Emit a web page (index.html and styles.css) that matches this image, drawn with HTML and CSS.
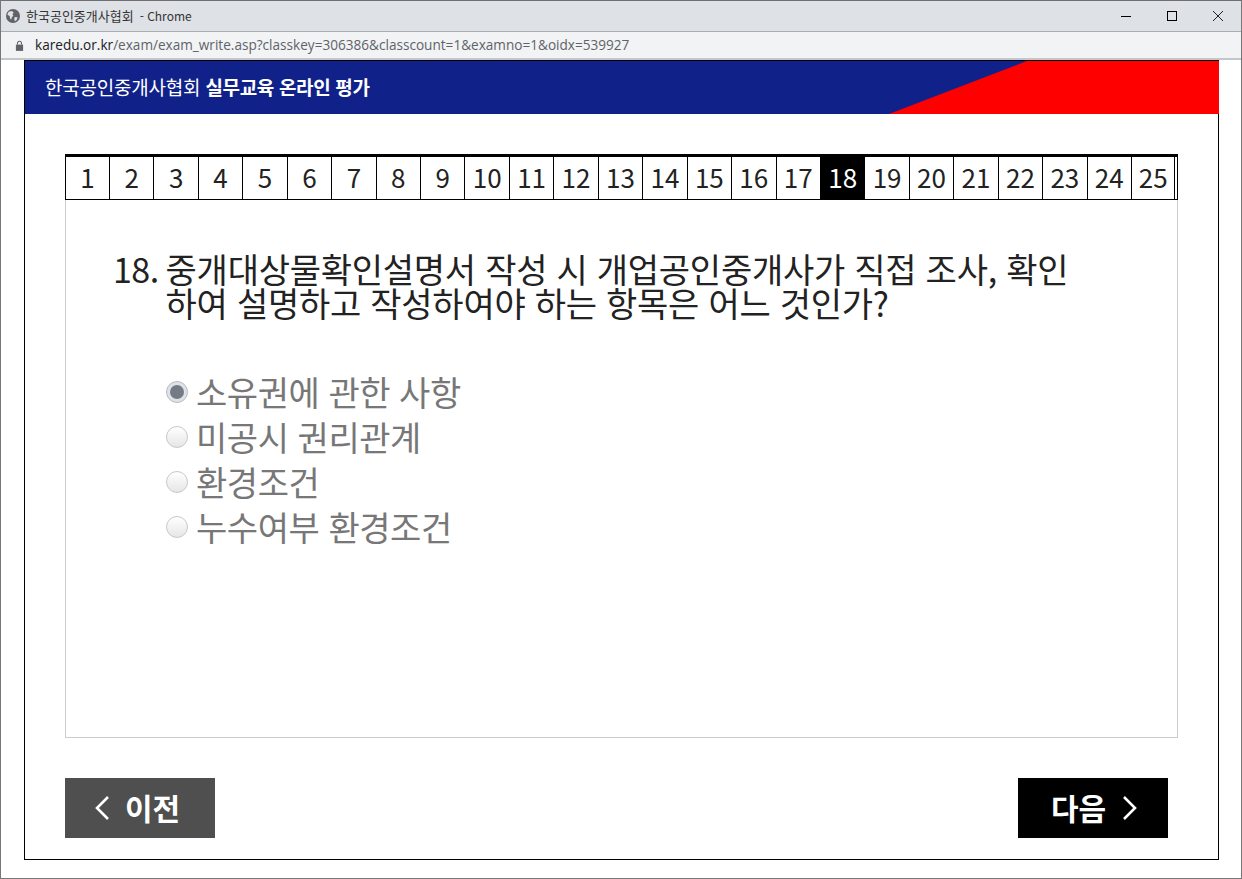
FILE: index.html
```html
<!DOCTYPE html>
<html lang="ko">
<head>
<meta charset="utf-8">
<title>한국공인중개사협회 - Chrome</title>
<link rel="stylesheet" href="styles.css">
</head>
<body>
<div class="window">
  <div class="titlebar">
    <svg class="favicon" viewBox="0 0 16 16" width="14" height="14"><circle cx="8" cy="8" r="8" fill="#5f6368"/><path d="M3 3.2 6.6 2.4 8.8 4 7.4 6 8.4 7.4 6.6 9.6 5.8 12.4 4.6 10.6 4.2 8 1.6 6.6Z M10 9 13.2 9.4 12.2 12.6 10 14 9.4 11.4Z" fill="#dee1e6"/></svg>
    <span class="title">한국공인중개사협회</span>
    <span class="title-app">- Chrome</span>
    <div class="controls">
      <svg width="12" height="12" viewBox="0 0 12 12"><path d="M1 6.5H11" stroke="#000" stroke-width="1"/></svg>
      <svg width="12" height="12" viewBox="0 0 12 12"><rect x="1.5" y="1.5" width="9" height="9" fill="none" stroke="#000" stroke-width="1"/></svg>
      <svg width="12" height="12" viewBox="0 0 12 12"><path d="M1 1 11 11M11 1 1 11" stroke="#222" stroke-width="1"/></svg>
    </div>
  </div>
  <div class="addressbar">
    <svg class="lock" viewBox="0 0 10 12" width="9" height="11"><path d="M1 5H9V12H1Z" fill="#5f6368"/><path d="M2.8 5V3.4a2.2 2.2 0 0 1 4.4 0V5" fill="none" stroke="#5f6368" stroke-width="1.2"/></svg>
    <span class="url"><span class="host">karedu.or.kr</span>/exam/exam_write.asp?classkey=306386&amp;classcount=1&amp;examno=1&amp;oidx=539927</span>
  </div>
  <div class="page">
    <header class="banner">
      <h1 class="banner-title">한국공인중개사협회 <strong>실무교육 온라인 평가</strong></h1>
    </header>
    <main class="exam">
      <nav class="numbers">
        <span class="num">1</span><span class="num">2</span><span class="num">3</span><span class="num">4</span><span class="num">5</span><span class="num">6</span><span class="num">7</span><span class="num">8</span><span class="num">9</span><span class="num">10</span><span class="num">11</span><span class="num">12</span><span class="num">13</span><span class="num">14</span><span class="num">15</span><span class="num">16</span><span class="num">17</span><span class="num current">18</span><span class="num">19</span><span class="num">20</span><span class="num">21</span><span class="num">22</span><span class="num">23</span><span class="num">24</span><span class="num">25</span>
      </nav>
      <section class="panel">
        <div class="question">
          <span class="q-no">18.</span>
          <span class="q-text">중개대상물확인설명서 작성 시 개업공인중개사가 직접 조사, 확인 하여 설명하고 작성하여야 하는 항목은 어느 것인가?</span>
        </div>
        <div class="options">
          <label class="option"><input type="radio" name="a" checked disabled><span>소유권에 관한 사항</span></label>
          <label class="option"><input type="radio" name="a" disabled><span>미공시 권리관계</span></label>
          <label class="option"><input type="radio" name="a" disabled><span>환경조건</span></label>
          <label class="option"><input type="radio" name="a" disabled><span>누수여부 환경조건</span></label>
        </div>
      </section>
      <div class="actions">
        <a class="btn prev"><svg width="16" height="26" viewBox="0 0 16 26"><path d="M14 2 3 13 14 24" fill="none" stroke="#fff" stroke-width="2.6"/></svg><span class="btn-label">이전</span></a>
        <a class="btn next"><span class="btn-label">다음</span><svg width="16" height="26" viewBox="0 0 16 26"><path d="M2 2 13 13 2 24" fill="none" stroke="#fff" stroke-width="2.6"/></svg></a>
      </div>
    </main>
  </div>
</div>
</body>
</html>
```
FILE: styles.css
```css
* { box-sizing: border-box; }
html, body { margin: 0; padding: 0; height: 100%; background: #fff; overflow: hidden; }
body { font-family: "Noto Sans CJK KR", "Noto Sans", sans-serif; }
.window { width: 1242px; height: 879px; border: 1px solid #777; border-top-color: #6e7072; display: flex; flex-direction: column; background: #fff; }
.titlebar { height: 31px; flex: none; background: #dee1e6; border-bottom: 1px solid #abaeb1; display: flex; align-items: center; padding: 0 0 0 5px; }
.favicon { flex: none; }
.title { margin: 0 0 2px 6px; font-size: 13px; color: #333; white-space: pre; }
.title-app { margin: 0 0 2px 6px; font-size: 12px; color: #333; white-space: pre; }
.controls { margin-left: auto; display: flex; gap: 34px; padding-right: 17px; align-items: center; }
.addressbar { height: 28px; flex: none; background: #f1f3f4; border-bottom: 2px solid #c4c6c8; display: flex; align-items: center; padding: 0 0 0 14px; }
.lock { flex: none; }
.url { margin: 0 0 2px 11px; font-family: "Open Sans", sans-serif; font-size: 13.6px; color: #5f6368; }
.host { color: #202124; }
.page { flex: none; width: 1195px; height: 800px; margin-left: 23px; border: 1px solid #000; display: flex; flex-direction: column; }
.banner { height: 53px; flex: none; margin-right: -1px; background: #10228a; display: flex; align-items: center; padding: 0 0 2px 20px; position: relative; overflow: hidden; }
.banner::after { content: ""; position: absolute; top: 0; right: 0; bottom: 0; width: 330px; background: #f00; clip-path: polygon(138px 0, 100% 0, 100% 100%, 0 100%); }
.banner-title { margin: 0; font-size: 19px; font-weight: 400; color: #fff; letter-spacing: -0.22px; line-height: 1; }
.banner-title strong { font-weight: 700; letter-spacing: -0.35px; }
.exam { flex: 1; padding: 40px 0 0 40px; display: flex; flex-direction: column; }
.numbers { width: 1113px; height: 46px; flex: none; border-top: 3px solid #000; border-bottom: 1px solid #000; border-right: 1px solid #000; display: grid; grid-template-columns: 43.945px repeat(24, 44.445px); }
.num { display: flex; align-items: center; justify-content: center; border-left: 1px solid #000; font-size: 26px; color: #222; line-height: 1; padding-bottom: 2px; }
.num:last-child { border-right: 1px solid #000; }
.current { background: #000; color: #fff; }
.panel { width: 1113px; height: 538px; flex: none; border: solid #ccc; border-width: 0 1px 1px 1px; padding: 52px 0 0 47px; }
.question { display: flex; gap: 7px; width: 970px; font-size: 34px; line-height: 34px; color: #222; letter-spacing: -0.25px; }
.q-no { flex: none; letter-spacing: -0.55px; }
.q-text { display: block; }
.options { margin-top: 49px; padding-left: 53px; display: flex; flex-direction: column; }
.option { display: flex; align-items: center; height: 45px; font-size: 34px; color: #777; letter-spacing: -0.45px; gap: 8px; }
.option input { appearance: none; -webkit-appearance: none; margin: 1px 0 0; width: 22px; height: 22px; flex: none; border-radius: 50%; border: 1px solid #c8c8c8; background: linear-gradient(#fff, #e6e6e6); position: relative; }
.option input:checked { border-color: #b4bcc8; background: #dfe3e8; }
.option input:checked::after { content: ""; position: absolute; inset: 3px; border-radius: 50%; background: #757b85; }
.actions { margin-top: 40px; width: 1103px; display: flex; justify-content: space-between; }
.btn { width: 150px; height: 60px; display: flex; align-items: center; justify-content: center; gap: 15px; color: #fff; font-size: 30px; font-weight: 700; letter-spacing: 0; line-height: 1; }
.btn-label { margin-bottom: 3px; }
.prev { background: #4f4f4f; padding-right: 6px; }
.next { background: #000; padding-left: 3px; gap: 16px; }
```
